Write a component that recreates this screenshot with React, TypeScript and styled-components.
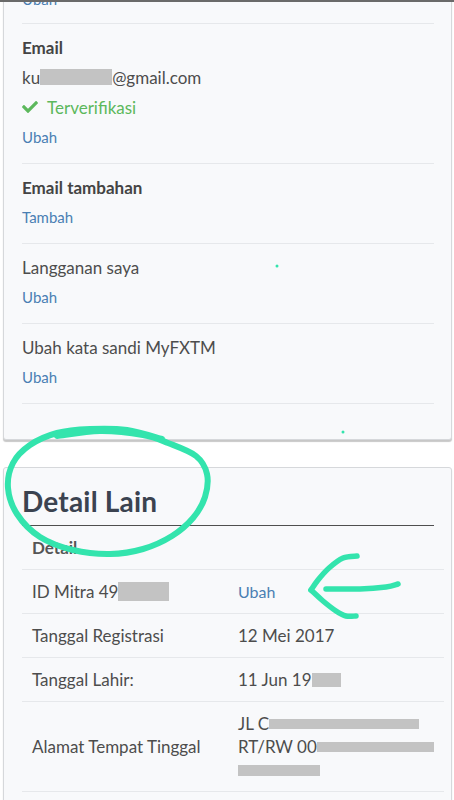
import React from "react";
import styled, { createGlobalStyle } from "styled-components";
import { FaCheck } from "react-icons/fa";

const Global = createGlobalStyle`
  html, body { margin: 0; padding: 0; background: #ffffff; }
  body { font-family: Lato, "Noto Sans", sans-serif; color: #4d4d4d; overflow: hidden; }
  * { box-sizing: border-box; }
`;

const Page = styled.div`
  position: relative;
  width: 454px;
  height: 800px;
  overflow: hidden;
  background: #ffffff;
`;

const TopEdge = styled.div`
  position: absolute;
  top: 0;
  left: 0;
  right: 0;
  height: 2px;
  background: #6a6a6a;
  z-index: 3;
`;

const Card = styled.div<{ $offset?: number }>`
  margin: ${(p) => p.$offset ?? 0}px 2px 0 3px;
  background: #f8f9fb;
  border: 1px solid #d6d8db;
  border-radius: 3px;
  box-shadow: 0 2px 1px rgba(0, 0, 0, 0.22);
`;

const Settings = styled.div`
  padding: 0 17px 35px 18px;
`;

const Section = styled.div<{ $first?: boolean }>`
  padding: ${(p) => (p.$first ? "0 0 9px" : "8px 0 11px")};
  border-bottom: 1px solid #e6e8eb;
`;

const Line = styled.div`
  height: 30px;
  display: flex;
  align-items: center;
  font-size: 17px;
  white-space: nowrap;
`;

const Label = styled(Line)<{ $bold?: boolean }>`
  font-weight: ${(p) => (p.$bold ? 700 : 400)};
  color: ${(p) => (p.$bold ? "#444444" : "#4d4d4d")};
`;

const Link = styled(Line)`
  color: #4a7fb3;
  font-size: 15px;
`;

const Verified = styled(Line)`
  color: #5cb85c;
  gap: 9px;
  svg { width: 16px; height: 16px; }
`;

const Redact = styled.span<{ $w: number; $h: number; $dy?: number }>`
  display: inline-block;
  width: ${(p) => p.$w}px;
  height: ${(p) => p.$h}px;
  background: #c3c3c3;
  vertical-align: middle;
  position: relative;
  top: ${(p) => p.$dy ?? 0}px;
`;

const Gap = styled.div`
  height: 27px;
`;

const Details = styled.div`
  padding: 12px 17px 30px 18px;
`;

const Heading = styled.h2`
  margin: 0;
  font-size: 28px;
  font-weight: 700;
  color: #3b4350;
  line-height: 42px;
  padding-bottom: 3px;
  border-bottom: 1px solid #4f4f4f;
  letter-spacing: 0.2px;
`;

const Table = styled.div`
  display: grid;
  grid-template-columns: 206px 1fr;
`;

const Cell = styled.div<{ $head?: boolean; $link?: boolean }>`
  padding: 10px 10px;
  line-height: 22px;
  font-size: ${(p) => (p.$link ? 16 : 17)}px;
  min-height: 44px;
  display: flex;
  align-items: center;
  border-bottom: 1px solid #e6e8eb;
  font-weight: ${(p) => (p.$head ? 700 : 400)};
  color: ${(p) => (p.$link ? "#4a7fb3" : p.$head ? "#555555" : "#4d4d4d")};
  white-space: nowrap;
`;

const Multi = styled.div`
  display: flex;
  flex-direction: column;
  line-height: 23px;
`;

const Overlay = styled.svg`
  position: absolute;
  left: 0;
  top: 0;
  width: 454px;
  height: 800px;
  pointer-events: none;
  z-index: 2;
`;

type P = [number, number];
function smooth(pts: P[]): string {
  let d = `M ${pts[0][0]} ${pts[0][1]}`;
  for (let i = 0; i < pts.length - 1; i++) {
    const p0 = pts[Math.max(0, i - 1)];
    const p1 = pts[i];
    const p2 = pts[i + 1];
    const p3 = pts[Math.min(pts.length - 1, i + 2)];
    const c1: P = [p1[0] + (p2[0] - p0[0]) / 6, p1[1] + (p2[1] - p0[1]) / 6];
    const c2: P = [p2[0] - (p3[0] - p1[0]) / 6, p2[1] - (p3[1] - p1[1]) / 6];
    d += ` C ${c1[0].toFixed(1)} ${c1[1].toFixed(1)} ${c2[0].toFixed(1)} ${c2[1].toFixed(1)} ${p2[0]} ${p2[1]}`;
  }
  return d;
}

const circlePts: P[] = [
  [57, 436], [100, 431], [143, 435], [168, 443], [196, 456], [207, 474], [205, 497],
  [193, 518], [172, 536], [143, 549], [110, 554], [73, 550], [40, 537], [17, 514],
  [8, 488], [13, 463], [30, 445], [57, 433], [90, 429], [127, 430], [162, 439],
];
const upper: P[] = [[357, 556], [343, 558], [329, 568], [318, 580], [311, 590]];
const lower: P[] = [[311, 590], [323, 601], [336, 611], [346, 616], [356, 616]];
const shaft: P[] = [[326, 589], [360, 589], [386, 587], [398, 584]];

const INK = "#33e4ad";

export default function App() {
  return (
    <Page>
      <Global />
      <TopEdge />
      <Card $offset={-17}>
        <Settings>
          <Section $first>
            <Link>Ubah</Link>
          </Section>
          <Section>
            <Label $bold>Email</Label>
            <Label>
              ku
              <Redact $w={72} $h={16} />
              @gmail.com
            </Label>
            <Verified>
              <FaCheck />
              Terverifikasi
            </Verified>
            <Link>Ubah</Link>
          </Section>
          <Section>
            <Label $bold>Email tambahan</Label>
            <Link>Tambah</Link>
          </Section>
          <Section>
            <Label>Langganan saya</Label>
            <Link>Ubah</Link>
          </Section>
          <Section>
            <Label>Ubah kata sandi MyFXTM</Label>
            <Link>Ubah</Link>
          </Section>
        </Settings>
      </Card>
      <Gap />
      <Card>
        <Details>
          <Heading>Detail Lain</Heading>
          <Table>
            <Cell $head>Detail</Cell>
            <Cell $head />
            <Cell>
              ID Mitra 49
              <Redact $w={51} $h={19} />
            </Cell>
            <Cell $link>Ubah</Cell>
            <Cell>Tanggal Registrasi</Cell>
            <Cell>12 Mei 2017</Cell>
            <Cell>Tanggal Lahir:</Cell>
            <Cell>
              11 Jun 19
              <Redact $w={29} $h={14} />
            </Cell>
            <Cell>Alamat Tempat Tinggal</Cell>
            <Cell>
              <Multi>
                <span>
                  JL C<Redact $w={150} $h={10} $dy={-2} />
                </span>
                <span>
                  RT/RW 00<Redact $w={117} $h={10} $dy={-2} />
                </span>
                <span>
                  <Redact $w={82} $h={11} $dy={-1} />
                </span>
              </Multi>
            </Cell>
          </Table>
        </Details>
      </Card>
      <Overlay viewBox="0 0 454 800">
        <path d={smooth(circlePts)} fill="none" stroke={INK} strokeWidth={6} strokeLinecap="round" strokeLinejoin="round" />
        <path d={smooth(upper)} fill="none" stroke={INK} strokeWidth={5.5} strokeLinecap="round" />
        <path d={smooth(lower)} fill="none" stroke={INK} strokeWidth={5.5} strokeLinecap="round" />
        <path d={smooth(shaft)} fill="none" stroke={INK} strokeWidth={5.5} strokeLinecap="round" />
        <circle cx={277} cy={266} r={1.5} fill={INK} />
        <circle cx={343} cy={432} r={1.5} fill={INK} />
      </Overlay>
    </Page>
  );
}
